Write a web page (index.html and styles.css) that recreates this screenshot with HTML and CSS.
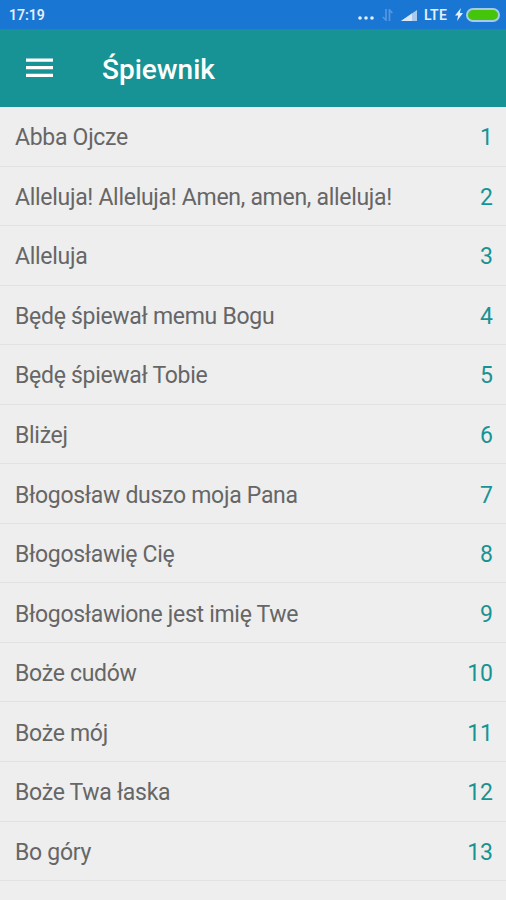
FILE: index.html
```html
<!DOCTYPE html>
<html lang="pl">
<head>
<meta charset="utf-8">
<title>Śpiewnik</title>
<link rel="stylesheet" href="styles.css">
</head>
<body>
<div class="status">
  <span class="clock">17:19</span>
  <div class="indicators">
    <svg class="dots" width="16" height="4" viewBox="0 0 16 4" fill="#e4effb"><circle cx="2" cy="2" r="1.8"/><circle cx="8" cy="2" r="1.8"/><circle cx="14" cy="2" r="1.8"/></svg>
    <svg class="data" width="11" height="12" viewBox="0 0 11 12" fill="none" stroke="#5497e0" stroke-width="1.7"><path d="M4 0v11L.8 8M7.500 12V1l2.900 3"/></svg>
    <svg class="signal" width="16" height="11" viewBox="0 0 16 11"><path d="M0 11L16 0v11z" fill="#a9c9ef"/><path d="M0 11L11 3.440V11z" fill="#d9e7f8"/></svg>
    <span class="lte">LTE</span>
    <svg class="bolt" width="8" height="13" viewBox="0 0 8 13" fill="#e4effb"><path d="M6 0L0 7.500h3.200L2 13l6-8H4.800z"/></svg>
    <span class="battery"></span>
  </div>
</div>
<header class="bar">
  <svg class="menu" width="27" height="20" viewBox="0 0 27 20" fill="#fff"><path d="M0 .500h27v3.200H0zM0 8h27v3.200H0zM0 15.700h27v3.200H0z"/></svg>
  <h1 class="title">Śpiewnik</h1>
</header>
<ul class="songs">
  <li class="song"><span class="name">Abba Ojcze</span><span class="num">1</span></li>
  <li class="song"><span class="name">Alleluja! Alleluja! Amen, amen, alleluja!</span><span class="num">2</span></li>
  <li class="song"><span class="name">Alleluja</span><span class="num">3</span></li>
  <li class="song"><span class="name">Będę śpiewał memu Bogu</span><span class="num">4</span></li>
  <li class="song"><span class="name">Będę śpiewał Tobie</span><span class="num">5</span></li>
  <li class="song"><span class="name">Bliżej</span><span class="num">6</span></li>
  <li class="song"><span class="name">Błogosław duszo moja Pana</span><span class="num">7</span></li>
  <li class="song"><span class="name">Błogosławię Cię</span><span class="num">8</span></li>
  <li class="song"><span class="name">Błogosławione jest imię Twe</span><span class="num">9</span></li>
  <li class="song"><span class="name">Boże cudów</span><span class="num">10</span></li>
  <li class="song"><span class="name">Boże mój</span><span class="num">11</span></li>
  <li class="song"><span class="name">Boże Twa łaska</span><span class="num">12</span></li>
  <li class="song"><span class="name">Bo góry</span><span class="num">13</span></li>
</ul>
</body>
</html>
```
FILE: styles.css
```css
* { box-sizing: border-box; }
body { margin: 0; height: 900px; overflow: hidden; background: #eee; font-family: Roboto, sans-serif; }
.status { height: 29px; background: #1976d2; color: #e4effb; display: flex; align-items: center; justify-content: space-between; padding: 0 6px 0 9px; font-size: 14px; font-weight: 600; }
.indicators { display: flex; align-items: center; }
.dots { margin: 7px 8px 0 0; }
.data { margin-right: 8px; }
.signal { margin: 2px 7px 0 0; }
.lte { letter-spacing: .2px; }
.bolt { margin: 0 3px 0 8px; }
.battery { width: 34px; height: 14px; border: 2px solid #a5cbe8; border-radius: 7px; background: #44c40b; }
.bar { height: 78px; background: #189395; color: #fff; display: flex; align-items: center; padding-left: 26px; }
.title { margin: 3px 0 0 49px; font-size: 28px; font-weight: 500; line-height: 32px; }
.songs { margin: 0; padding: 0; list-style: none; }
.song { height: 59.56px; display: flex; align-items: center; justify-content: space-between; padding: 3px 13px 0 15px; border-bottom: 1px solid #e2e2e2; font-size: 23px; color: #666; }
.name { letter-spacing: -.29px; }
.num { color: #189395; }
```
